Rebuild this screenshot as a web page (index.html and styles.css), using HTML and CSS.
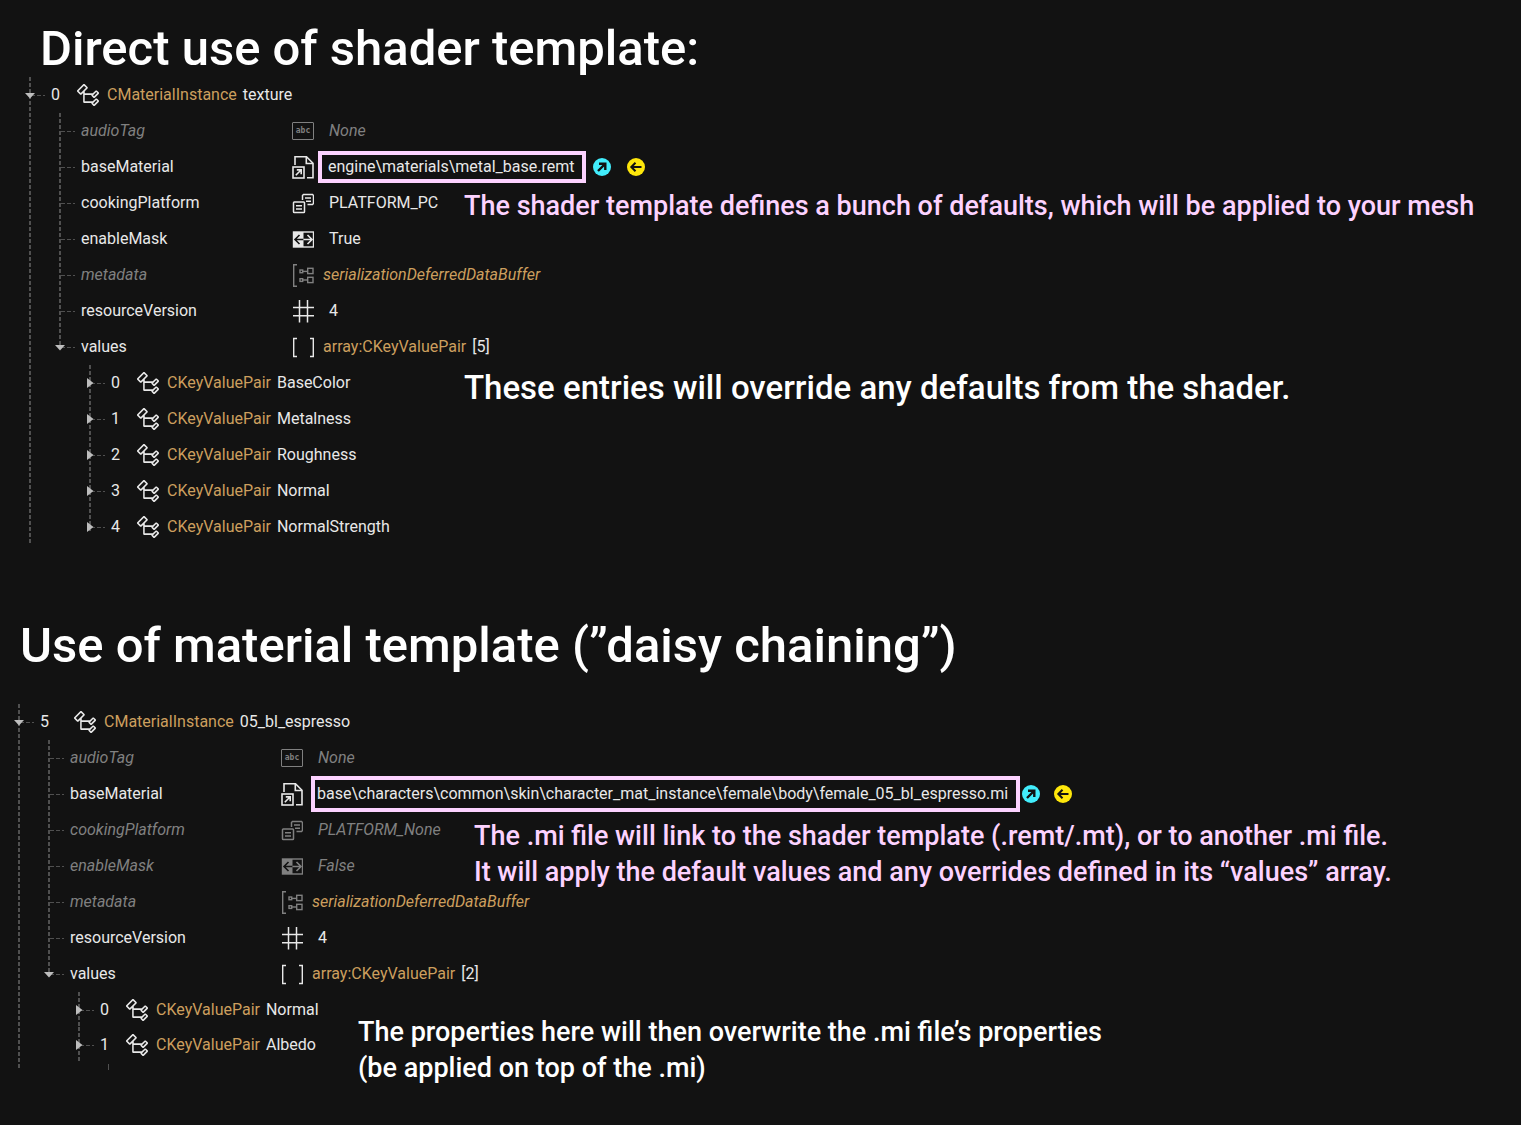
FILE: index.html
```html
<!DOCTYPE html>
<html lang="en">
<head>
<meta charset="utf-8">
<meta name="viewport" content="width=device-width, initial-scale=1">
<title>Material instances: shader template and material template</title>
<link rel="stylesheet" href="styles.css">
</head>
<body>
<svg class="sprite" aria-hidden="true">
  <symbol id="i-class" viewBox="1 1 13.75 13.75"><path fill="currentColor" d="M11.34 9.71h.71l2.67-2.67v-.71L13.38 5h-.7l-1.82 1.81h-5V5.56l1.86-1.85V3l-2-2H5L1 5v.71l2 2h.71l1.14-1.15v5.79l.5.5H10v.52l1.33 1.34h.71l2.67-2.67v-.71L13.37 10h-.7l-1.86 1.85h-5v-4H10v.48l1.34 1.38zm1.69-3.65l.63.63-2 2-.63-.63 2-2zm0 5l.63.63-2 2-.63-.63 2-2zM3.35 6.65l-1.29-1.3 3.29-3.29 1.3 1.29-3.3 3.3z"/></symbol>
  <symbol id="i-file" viewBox="0 0 22 24"><g fill="none" stroke="currentColor" stroke-width="1.6"><path d="M3 10V1.8h11.5L21 8.3v14.4h-6"/><path d="M14.3 1.8v6.700H21"/><rect x="1" y="12" width="11" height="11"/><path d="M3.800 20.200L9 15M4.800 14.900H9.200v4.400"/></g></symbol>
  <symbol id="i-enum" viewBox="0 0 22 24"><g fill="none" stroke="currentColor" stroke-width="1.5"><path d="M10.500 9V4.500l1-1h9l1 1v8l-1 1h-5"/><rect x="1.500" y="11" width="11" height="10.500" rx=".8"/><path d="M13 7h6M14 10.200h5M4 14.700h6M4 18h6"/></g></symbol>
  <symbol id="i-bool" viewBox="0 0 22 24"><rect x="1.500" y="5" width="20" height="15" fill="none" stroke="currentColor" stroke-width="1.400"/><path fill="currentColor" d="M1 5h10.500v15H1z"/><path d="M11.500 12.500H3.500M7.500 8l-4.500 4.500L7.500 17" class="cut"/><path d="M11.500 12.500h8M15.500 8l4.500 4.500-4.500 4.500" fill="none" stroke="currentColor" stroke-width="1.600"/></symbol>
  <symbol id="i-buffer" viewBox="0 0 22 24"><g fill="none" stroke="currentColor" stroke-width="1.400"><path d="M5 1.700H1.700v21.600H5"/><rect x="8" y="7" width="2.700" height="2.700"/><rect x="15.700" y="5.300" width="5.300" height="5.300"/><path d="M10.700 8.400h5"/><rect x="8" y="15.700" width="2.700" height="2.700"/><rect x="15.700" y="14.300" width="5.300" height="5.300"/><path d="M10.700 17h5"/></g></symbol>
  <symbol id="i-number" viewBox="0 0 22 24"><path fill="none" stroke="currentColor" stroke-width="1.500" d="M7.500 1v22.500M15.500 1v22.500M1 8.500h21M1 16.700h21"/></symbol>
  <symbol id="i-array" viewBox="0 0 22 24"><path fill="none" stroke="currentColor" stroke-width="1.400" d="M5 3.500H1.700v18H5M18 3.500h3.300v18H18"/></symbol>
  <symbol id="i-open" viewBox="0 0 18 18"><path fill="none" stroke="currentColor" stroke-width="2.400" d="M5 13l7-7M6 5.700h6.300V12"/></symbol>
  <symbol id="i-back" viewBox="0 0 18 18"><path fill="none" stroke="currentColor" stroke-width="2" d="M14.500 9H5M8.500 4.800L4.300 9l4.200 4.200"/></symbol>
  <symbol id="i-down" viewBox="0 0 12 12"><path fill="currentColor" d="M1 4h10L6 9.500z"/></symbol>
  <symbol id="i-right" viewBox="0 0 12 12"><path fill="currentColor" d="M3 1v10l6.500-5z"/></symbol>
</svg>

<main>
<section class="example">
  <h1 class="title title--indented">Direct use of shader template:</h1>
  <div class="stage">
    <ul class="tree tree--direct">
      <li class="node">
        <div class="row"><span class="twig"><button class="toggle" aria-label="Collapse texture" aria-expanded="true"><svg><use href="#i-down"/></svg></button></span><span class="index index--root">0</span><svg class="icon icon--class"><use href="#i-class"/></svg><span class="type">CMaterialInstance</span><span class="name">texture</span></div>
        <ul class="branch branch--fields">
          <li class="node"><div class="row row--unset"><span class="twig"></span><span class="label">audioTag</span><span class="icon icon--string">abc</span><span class="value">None</span></div></li>
          <li class="node"><div class="row"><span class="twig"></span><span class="label">baseMaterial</span><svg class="icon"><use href="#i-file"/></svg><span class="path">engine\materials\metal_base.remt</span><span class="actions"><button class="dot dot--open" aria-label="Open file"><svg><use href="#i-open"/></svg></button><button class="dot dot--back" aria-label="Use selected file"><svg><use href="#i-back"/></svg></button></span></div></li>
          <li class="node"><div class="row"><span class="twig"></span><span class="label">cookingPlatform</span><svg class="icon"><use href="#i-enum"/></svg><span class="value">PLATFORM_PC</span></div></li>
          <li class="node"><div class="row"><span class="twig"></span><span class="label">enableMask</span><svg class="icon"><use href="#i-bool"/></svg><span class="value">True</span></div></li>
          <li class="node"><div class="row row--unset"><span class="twig"></span><span class="label">metadata</span><svg class="icon"><use href="#i-buffer"/></svg><span class="value value--type">serializationDeferredDataBuffer</span></div></li>
          <li class="node"><div class="row"><span class="twig"></span><span class="label">resourceVersion</span><svg class="icon"><use href="#i-number"/></svg><span class="value">4</span></div></li>
          <li class="node">
            <div class="row"><span class="twig"><button class="toggle" aria-label="Collapse values" aria-expanded="true"><svg><use href="#i-down"/></svg></button></span><span class="label">values</span><svg class="icon"><use href="#i-array"/></svg><span class="value value--type">array:CKeyValuePair</span><span class="name">[5]</span></div>
            <ul class="branch">
              <li class="node"><div class="row"><span class="twig"><button class="toggle" aria-label="Expand BaseColor" aria-expanded="false"><svg><use href="#i-right"/></svg></button></span><span class="index">0</span><svg class="icon icon--class"><use href="#i-class"/></svg><span class="type">CKeyValuePair</span><span class="name">BaseColor</span></div></li>
              <li class="node"><div class="row"><span class="twig"><button class="toggle" aria-label="Expand Metalness" aria-expanded="false"><svg><use href="#i-right"/></svg></button></span><span class="index">1</span><svg class="icon icon--class"><use href="#i-class"/></svg><span class="type">CKeyValuePair</span><span class="name">Metalness</span></div></li>
              <li class="node"><div class="row"><span class="twig"><button class="toggle" aria-label="Expand Roughness" aria-expanded="false"><svg><use href="#i-right"/></svg></button></span><span class="index">2</span><svg class="icon icon--class"><use href="#i-class"/></svg><span class="type">CKeyValuePair</span><span class="name">Roughness</span></div></li>
              <li class="node"><div class="row"><span class="twig"><button class="toggle" aria-label="Expand Normal" aria-expanded="false"><svg><use href="#i-right"/></svg></button></span><span class="index">3</span><svg class="icon icon--class"><use href="#i-class"/></svg><span class="type">CKeyValuePair</span><span class="name">Normal</span></div></li>
              <li class="node"><div class="row"><span class="twig"><button class="toggle" aria-label="Expand NormalStrength" aria-expanded="false"><svg><use href="#i-right"/></svg></button></span><span class="index">4</span><svg class="icon icon--class"><use href="#i-class"/></svg><span class="type">CKeyValuePair</span><span class="name">NormalStrength</span></div></li>
            </ul>
          </li>
        </ul>
      </li>
    </ul>
    <p class="note note--pink note--defaults">The shader template defines a bunch of defaults, which will be applied to your mesh</p>
    <p class="note note--large note--entries">These entries will override any defaults from the shader.</p>
  </div>
</section>

<section class="example">
  <h1 class="title title--spaced">Use of material template (”daisy chaining”)</h1>
  <div class="stage">
    <ul class="tree tree--chained">
      <li class="node">
        <div class="row"><span class="twig"><button class="toggle" aria-label="Collapse 05_bl_espresso" aria-expanded="true"><svg><use href="#i-down"/></svg></button></span><span class="index index--root">5</span><svg class="icon icon--class"><use href="#i-class"/></svg><span class="type">CMaterialInstance</span><span class="name">05_bl_espresso</span></div>
        <ul class="branch branch--fields">
          <li class="node"><div class="row row--unset"><span class="twig"></span><span class="label">audioTag</span><span class="icon icon--string">abc</span><span class="value">None</span></div></li>
          <li class="node"><div class="row"><span class="twig"></span><span class="label">baseMaterial</span><svg class="icon"><use href="#i-file"/></svg><span class="path">base\characters\common\skin\character_mat_instance\female\body\female_05_bl_espresso.mi</span><span class="actions"><button class="dot dot--open" aria-label="Open file"><svg><use href="#i-open"/></svg></button><button class="dot dot--back" aria-label="Use selected file"><svg><use href="#i-back"/></svg></button></span></div></li>
          <li class="node"><div class="row row--unset"><span class="twig"></span><span class="label">cookingPlatform</span><svg class="icon"><use href="#i-enum"/></svg><span class="value">PLATFORM_None</span></div></li>
          <li class="node"><div class="row row--unset"><span class="twig"></span><span class="label">enableMask</span><svg class="icon"><use href="#i-bool"/></svg><span class="value">False</span></div></li>
          <li class="node"><div class="row row--unset"><span class="twig"></span><span class="label">metadata</span><svg class="icon"><use href="#i-buffer"/></svg><span class="value value--type">serializationDeferredDataBuffer</span></div></li>
          <li class="node"><div class="row"><span class="twig"></span><span class="label">resourceVersion</span><svg class="icon"><use href="#i-number"/></svg><span class="value">4</span></div></li>
          <li class="node">
            <div class="row"><span class="twig"><button class="toggle" aria-label="Collapse values" aria-expanded="true"><svg><use href="#i-down"/></svg></button></span><span class="label">values</span><svg class="icon"><use href="#i-array"/></svg><span class="value value--type">array:CKeyValuePair</span><span class="name">[2]</span></div>
            <ul class="branch branch--compact">
              <li class="node"><div class="row"><span class="twig"><button class="toggle" aria-label="Expand Normal" aria-expanded="false"><svg><use href="#i-right"/></svg></button></span><span class="index">0</span><svg class="icon icon--class"><use href="#i-class"/></svg><span class="type">CKeyValuePair</span><span class="name">Normal</span></div></li>
              <li class="node"><div class="row"><span class="twig"><button class="toggle" aria-label="Expand Albedo" aria-expanded="false"><svg><use href="#i-right"/></svg></button></span><span class="index">1</span><svg class="icon icon--class"><use href="#i-class"/></svg><span class="type">CKeyValuePair</span><span class="name">Albedo</span></div>
                <div class="stub"></div>
              </li>
            </ul>
          </li>
        </ul>
      </li>
    </ul>
    <p class="note note--pink note--link">The .mi file will link to the shader template (.remt/.mt), or to another .mi file.<br>It will apply the default values and any overrides defined in its “values” array.</p>
    <p class="note note--overwrite">The properties here will then overwrite the .mi file’s properties<br>(be applied on top of the .mi)</p>
  </div>
</section>
</main>
</body>
</html>
```
FILE: styles.css
```css
:root {
  --bg: #121212;
  --text: #e8e8e8;
  --unset: #808080;
  --gold: #cc9f5e;
  --pink: #fcd2ff;
  --guide: #505050;
  --row: 36px;
}

* { box-sizing: border-box; }

body {
  margin: 0;
  background: var(--bg);
  color: var(--text);
  font: 16px/20px Roboto, "Open Sans", sans-serif;
}

ul { list-style: none; margin: 0; padding: 0; }

.sprite { position: absolute; width: 0; height: 0; }

main { padding: 21px 0 55px; }

.example + .example { margin-top: 73px; }

.title {
  margin: 0;
  padding-left: 20px;
  color: #fff;
  font: 500 49px/56px Roboto, sans-serif;
}
.title--indented { padding-left: 40px; }
.title--spaced { padding-bottom: 30px; }

.stage { position: relative; }

/* Tree */
.tree--direct {
  --root-index: 26px;
  --path-margin: 4px;
  --path-height: 32px;
  --path-min: 268px;
  --path-padding: 6px;
  --dot-margin: 7px;
  --dot-gap: 16px;
  padding-left: 29px;
}
.tree--chained {
  --root-index: 34px;
  --path-margin: 8px;
  --path-height: 36px;
  --path-min: 709px;
  --path-padding: 2px;
  --dot-margin: 2px;
  --dot-gap: 14px;
  padding-left: 18px;
}

.branch { margin-left: 30px; }
.branch--compact { --row: 35px; }

.node {
  background: repeating-linear-gradient(var(--guide) 0 4px, transparent 4px 6px) 0 0 / 2px 100% no-repeat;
}
.branch > .node:last-child { background-size: 2px 22px; }
.branch--fields > .node:last-child { background-size: 2px 18px; }
.branch--compact > .node:last-child { background-size: 2px 36px; }

.row {
  display: flex;
  align-items: center;
  height: var(--row);
  white-space: nowrap;
}
.row--unset { color: var(--unset); font-style: italic; }

.twig {
  flex: none;
  display: flex;
  align-items: center;
  width: 22px;
  height: 12px;
  background: repeating-linear-gradient(90deg, transparent 0 2px, var(--guide) 2px 6px) 0 6px / 16px 1px no-repeat;
}

.toggle {
  flex: none;
  width: 12px;
  height: 12px;
  margin: 0 0 0 -5px;
  padding: 0;
  border: 0;
  background: none;
  color: #bdbdbd;
}
.toggle svg { display: block; width: 12px; height: 12px; }

.index { flex: none; width: 26px; }
.index--root { width: var(--root-index); }

.label { flex: none; width: 211px; }

.icon { flex: none; width: 22px; height: 24px; }
.icon--class { height: 22px; margin-right: 8px; }
.icon--string {
  height: 18px;
  border: 1px solid currentColor;
  border-radius: 1px;
  font: 700 8px/16px "DejaVu Sans Mono", monospace;
  text-align: center;
}
.cut { fill: none; stroke: var(--bg); stroke-width: 1.6; }

.type, .value--type { color: var(--gold); }
.name { margin-left: 6px; }
.value { margin-left: 15px; }
.value--type { margin-left: 9px; }

.path {
  flex: none;
  display: flex;
  align-items: center;
  min-width: var(--path-min);
  height: var(--path-height);
  margin-left: var(--path-margin);
  padding: 0 var(--path-padding);
  border: 4px solid var(--pink);
}

.actions {
  display: flex;
  gap: var(--dot-gap);
  margin-left: var(--dot-margin);
}
.dot {
  width: 18px;
  height: 18px;
  padding: 0;
  border: 0;
  border-radius: 50%;
  color: var(--bg);
}
.dot svg { display: block; width: 18px; height: 18px; }
.dot--open { background: #42edfc; }
.dot--back { background: #fee70b; }

/* Start of the next level, cut off at the end of the tree */
.stub {
  height: 8px;
  margin-left: 30px;
  background: linear-gradient(var(--guide), var(--guide)) 0 100% / 1px 6px no-repeat;
}

/* Annotations laid over the trees */
.note {
  position: absolute;
  margin: 0;
  color: #fff;
  font: 500 27px/36px Roboto, sans-serif;
}
.note--pink { color: var(--pink); }
.note--large { font-size: 33px; }
.note--defaults { top: 111px; left: 464px; }
.note--entries { top: 293px; left: 464px; }
.note--link { top: 114px; left: 474px; }
.note--overwrite { top: 310px; left: 358px; }
```
